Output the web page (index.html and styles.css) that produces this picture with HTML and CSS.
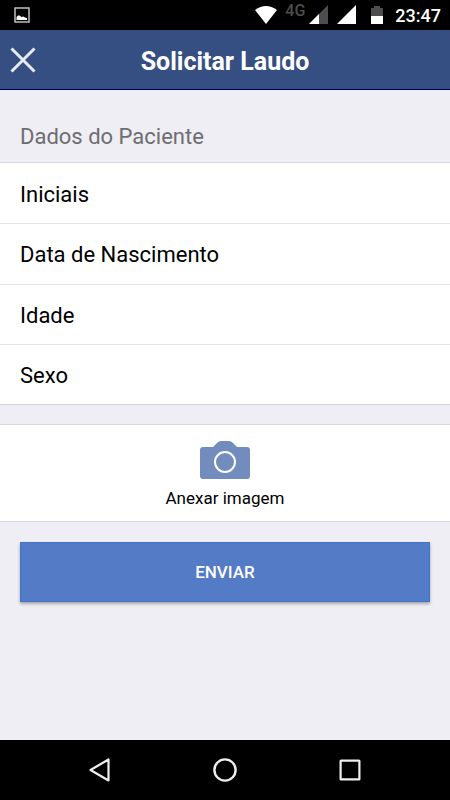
FILE: index.html
```html
<!DOCTYPE html>
<html lang="pt-BR">
<head>
    <meta charset="UTF-8">
    <meta name="viewport" content="width=device-width, initial-scale=1.0">
    <title>Solicitar Laudo</title>
    <link rel="stylesheet" href="styles.css">
</head>
<body>
    <div class="statusbar">
        <svg class="notification" width="16" height="16" viewBox="0 0 16 16">
            <rect x="1" y="1" width="14" height="14" fill="none" stroke="#ccc" stroke-width="1.4"/>
            <path d="M2.5 13V10L4 8.5H5.5L7.5 10L9.5 9.5L11 10.5L13 11V13Z" fill="#fff"/>
        </svg>
        <div class="status-icons">
            <svg width="24" height="20" viewBox="0 0 24 20">
                <path d="M1 5Q12-3 23 5L12 19Z" fill="#fff"/>
            </svg>
            <span class="network">4G</span>
            <svg width="20" height="20" viewBox="0 0 20 20">
                <path d="M19 0V19H0Z" fill="#4d4d4d"/>
                <path d="M10 9V19H0Z" fill="#fff"/>
            </svg>
            <svg class="signal" width="20" height="20" viewBox="0 0 20 20">
                <path d="M19 0V19H0Z" fill="#fff"/>
            </svg>
            <svg class="battery" width="12" height="18" viewBox="0 0 12 18">
                <path d="M0 2H3V0H9V2H12V10H0Z" fill="#4d4d4d"/>
                <path d="M0 10H12V18H0Z" fill="#fff"/>
            </svg>
            <span class="clock">23:47</span>
        </div>
    </div>

    <header class="navbar">
        <button class="close" type="button" aria-label="Fechar">
            <svg width="26" height="26" viewBox="0 0 26 26">
                <path d="M1.5 1.5L24.5 24.5M24.5 1.5L1.5 24.5" stroke="#e8ebf3" stroke-width="3" fill="none"/>
            </svg>
        </button>
        <h1>Solicitar Laudo</h1>
    </header>

    <form class="content">
        <h2>Dados do Paciente</h2>
        <div class="list">
            <div class="item">
                <label for="iniciais">Iniciais</label>
                <input id="iniciais" type="text">
            </div>
            <div class="item">
                <label for="nascimento">Data de Nascimento</label>
                <input id="nascimento" type="text">
            </div>
            <div class="item">
                <label for="idade">Idade</label>
                <input id="idade" type="text" inputmode="numeric">
            </div>
            <div class="item">
                <label for="sexo">Sexo</label>
                <select id="sexo">
                    <option value=""></option>
                    <option value="F">F</option>
                    <option value="M">M</option>
                </select>
            </div>
        </div>

        <button class="attach" type="button">
            <svg width="50" height="38" viewBox="0 0 50 38">
                <path d="M3 6H13L17 2Q19 0 21 0H29Q31 0 33 2L37 6H47Q50 6 50 9V35Q50 38 47 38H3Q0 38 0 35V9Q0 6 3 6Z" fill="#728dbd"/>
                <circle cx="25" cy="21" r="10" fill="none" stroke="#fff" stroke-width="2"/>
            </svg>
            <span>Anexar imagem</span>
        </button>

        <button class="send" type="submit">ENVIAR</button>
    </form>

    <nav class="softkeys">
        <button type="button" aria-label="Voltar">
            <svg width="24" height="24" viewBox="0 0 24 24">
                <path d="M20.5 1.5V22.5L2.5 12Z" fill="none" stroke="#eee" stroke-width="2.2" stroke-linejoin="round"/>
            </svg>
        </button>
        <button type="button" aria-label="Início">
            <svg width="24" height="24" viewBox="0 0 24 24">
                <circle cx="12" cy="12" r="10.6" fill="none" stroke="#eee" stroke-width="2.4"/>
            </svg>
        </button>
        <button type="button" aria-label="Recentes">
            <svg width="24" height="24" viewBox="0 0 24 24">
                <rect x="2.6" y="2.6" width="18.8" height="18.8" rx="0.5" fill="none" stroke="#eee" stroke-width="2.2"/>
            </svg>
        </button>
    </nav>
</body>
</html>
```
FILE: styles.css
```css
*{box-sizing: border-box;}
body{
    display: flex;
    flex-direction: column;
    min-height: 100vh;
    margin: 0;
    background: #efeef4;
    color: #000;
    font-family: Roboto, "Liberation Sans", sans-serif;
}
button{
    padding: 0;
    border: 0;
    background: none;
    color: inherit;
    font-family: inherit;
}
svg{
    display: block;
}

/* status bar */
.statusbar{
    display: flex;
    align-items: center;
    justify-content: space-between;
    height: 30px;
    padding: 0 9px 0 14px;
    background: #000;
    color: #fff;
}
.status-icons{
    display: flex;
    align-items: center;
}
.network{
    margin: 0 4px 8px 7px;
    color: #4d4d4d;
    font-size: 16px;
    font-weight: 500;
    line-height: 16px;
}
.signal{
    margin-left: 8px;
}
.battery{
    margin: 0 12px 0 14px;
}
.clock{
    font-size: 18px;
    font-weight: 500;
}

/* header */
.navbar{
    display: grid;
    grid-template-columns: 46px 1fr 46px;
    align-items: center;
    height: 60px;
    border-bottom: 1px solid #00005c;
    background: #354f82;
    color: #fff;
}
.close{
    padding-left: 10px;
}
.navbar h1{
    margin: 0;
    padding-top: 4px;
    font-size: 25px;
    font-weight: 700;
    text-align: center;
}

/* form */
.content{
    flex: 1;
    display: flex;
    flex-direction: column;
}
.content h2{
    margin: 0;
    padding: 33px 20px 11px;
    color: #6d6d72;
    font-size: 22px;
    font-weight: 400;
    line-height: 28px;
}
.list{
    display: grid;
    grid-auto-rows: 1fr;
    min-height: 243px;
    border-top: 1px solid #d8d7dd;
    border-bottom: 1px solid #d8d7dd;
    background: #fff;
}
.item{
    display: flex;
    align-items: center;
    gap: 16px;
    padding: 2px 20px 0;
    font-size: 22px;
}
.item + .item{
    border-top: 1px solid #e4e4e6;
}
.item input, .item select{
    flex: 1;
    min-width: 0;
    padding: 0;
    border: 0;
    outline: 0;
    appearance: none;
    background: none;
    font: inherit;
}
.attach{
    display: flex;
    flex-direction: column;
    align-items: center;
    gap: 8px;
    margin-top: 19px;
    padding: 16px 20px 12px;
    border-top: 1px solid #d8d7dd;
    border-bottom: 1px solid #d8d7dd;
    background: #fff;
    font-size: 17px;
    line-height: 22px;
}
.send{
    height: 60px;
    margin: 20px;
    border: 1px solid #4173ca;
    background: #547bc6;
    box-shadow: 0 2px 3px rgba(0, 0, 0, 0.3);
    color: #fff;
    font-size: 17px;
    font-weight: 500;
}

/* android keys */
.softkeys{
    display: flex;
    align-items: center;
    justify-content: center;
    gap: 101px;
    height: 60px;
    background: #000;
}
```
